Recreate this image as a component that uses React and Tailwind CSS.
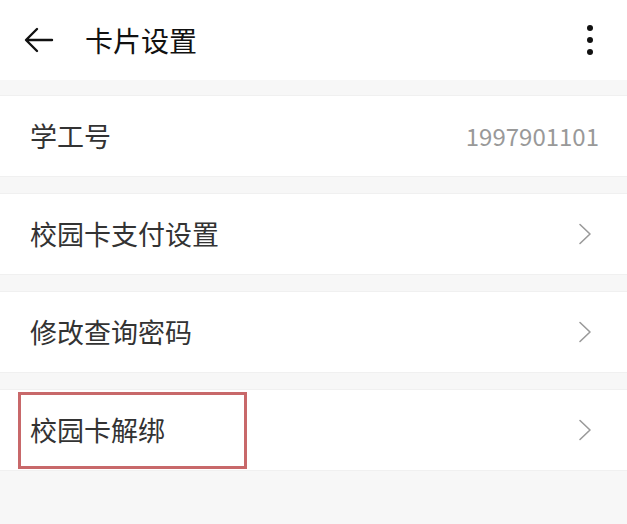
import React from 'react';

const Chevron = () => (
  <svg width="14" height="24" viewBox="0 0 14 24" fill="none" stroke="#9a9a9a" strokeWidth="1.6" strokeLinecap="round" strokeLinejoin="round">
    <path d="M2 2.5 L12 12 L2 21.5" />
  </svg>
);

const Row = ({ label, value, arrow, boxed }) => (
  <div className="relative flex h-[82px] items-center justify-between border-y border-[#f0f0f0] bg-white pl-[30px] pr-[35px]">
    <span className="text-[27px] text-[#333]">{label}</span>
    {value && <span className="text-[24px] text-[#999] -mr-[7px]">{value}</span>}
    {arrow && <Chevron />}
    {boxed && (
      <div className="absolute left-[18px] top-[2px] h-[77px] w-[229px] border-[3px] border-[#c8686a]" />
    )}
  </div>
);

export default function App() {
  return (
    <div
      className="flex h-[524px] w-[627px] flex-col bg-[#f7f7f7]"
      style={{ fontFamily: '"Noto Sans CJK SC", "Noto Sans", sans-serif' }}
    >
      <div className="flex h-[80px] items-center bg-white pl-[24px] pr-[34px]">
        <svg width="30" height="26" viewBox="0 0 30 26" fill="none" stroke="#111" strokeWidth="2.4" strokeLinecap="round" strokeLinejoin="round">
          <path d="M28 13 H3 M13 2 L2 13 L13 24" />
        </svg>
        <span className="ml-[31px] text-[28px] text-[#111]">卡片设置</span>
        <div className="ml-auto flex flex-col gap-[6px]">
          <span className="block h-[6px] w-[6px] rounded-full bg-[#111]" />
          <span className="block h-[6px] w-[6px] rounded-full bg-[#111]" />
          <span className="block h-[6px] w-[6px] rounded-full bg-[#111]" />
        </div>
      </div>
      <div className="mt-[15px] flex flex-col gap-[16px]">
        <Row label="学工号" value="1997901101" />
        <Row label="校园卡支付设置" arrow />
        <Row label="修改查询密码" arrow />
        <Row label="校园卡解绑" arrow boxed />
      </div>
    </div>
  );
}
